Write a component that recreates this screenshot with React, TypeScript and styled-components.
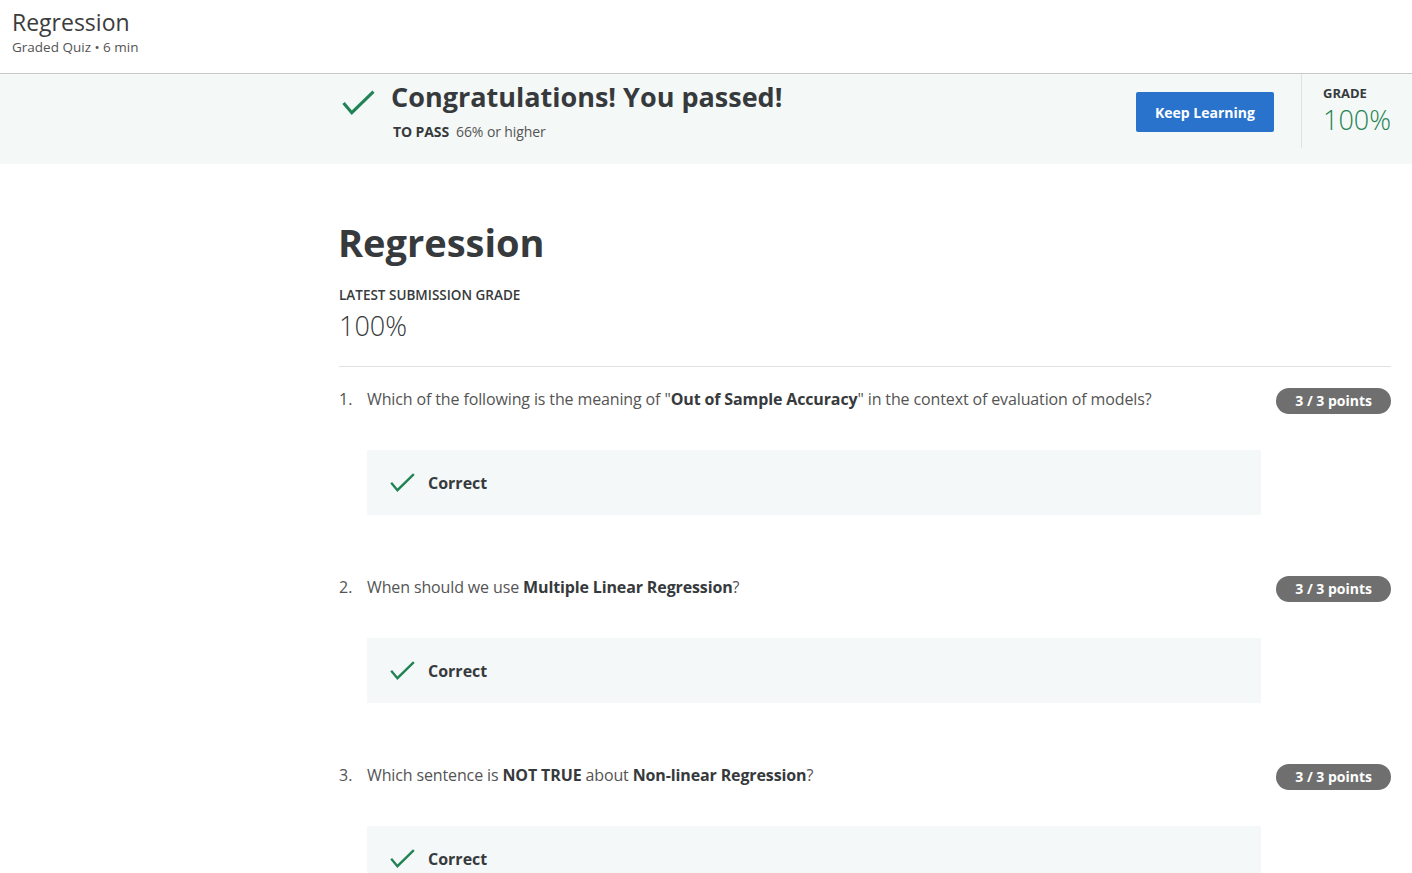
import React from "react";
import styled, { createGlobalStyle } from "styled-components";

const Global = createGlobalStyle`
  html, body { margin: 0; padding: 0; background: #fff; }
  body { font-family: "Open Sans", "Noto Sans", Arial, sans-serif; color: #373a3c; }
  * { box-sizing: border-box; }
`;

const Header = styled.header`
  height: 74px;
  border-bottom: 1px solid #c8c8c8;
  padding: 6px 12px 0;
`;

const HeaderTitle = styled.h1`
  margin: 0;
  font-size: 23px;
  font-weight: 400;
  line-height: 32px;
  color: #3c3c3c;
`;

const HeaderSub = styled.div`
  font-size: 13.5px;
  line-height: 18px;
  color: #545454;
`;

const Banner = styled.section`
  height: 90px;
  background: #f4f8f7;
  display: flex;
  align-items: flex-start;
  padding-left: 342px;
`;

const BannerMain = styled.div`
  flex: 1;
  display: flex;
  gap: 16px;
  padding-top: 8px;
`;

const BannerIcon = styled.div`
  padding-top: 8px;
`;

const BannerTitle = styled.h2`
  margin: 0;
  font-size: 27px;
  font-weight: 700;
  line-height: 30px;
  color: #373a3c;
`;

const PassLine = styled.div`
  margin-top: 12px;
  font-size: 14px;
  line-height: 16px;
  color: #545454;
  margin-left: 2px;
  letter-spacing: -0.1px;
  b { color: #373a3c; font-weight: 700; margin-right: 7px; }
`;

const Button = styled.button`
  margin-top: 18px;
  width: 138px;
  height: 40px;
  background: #2a73cc;
  color: #fff;
  border: none;
  border-radius: 2px;
  font-family: inherit;
  font-size: 14px;
  font-weight: 700;
  margin-right: 27px;
`;

const GradeBox = styled.div`
  height: 74px;
  width: 111px;
  border-left: 1px solid #dfe2e1;
  padding: 11px 0 0 21px;
`;

const GradeLabel = styled.div`
  font-size: 13px;
  font-weight: 700;
  line-height: 16px;
  color: #373a3c;
`;

const GradeValue = styled.div`
  margin-top: 4px;
  font-size: 27px;
  font-weight: 300;
  line-height: 30px;
  color: #1f8354;
`;

const Main = styled.main`
  margin-left: 339px;
  margin-right: 21px;
  padding-top: 52px;
`;

const Title = styled.h1`
  margin: 0 0 0 -1px;
  font-size: 38px;
  font-weight: 700;
  line-height: 52px;
  color: #373a3c;
`;

const SubLabel = styled.div`
  margin-top: 18px;
  font-size: 13.5px;
  font-weight: 600;
  line-height: 18px;
  color: #373a3c;
  text-transform: uppercase;
`;

const Score = styled.div`
  margin-top: 4px;
  font-size: 27px;
  font-weight: 300;
  line-height: 36px;
  color: #373a3c;
`;

const Divider = styled.hr`
  margin: 22px 0 0;
  border: none;
  border-top: 1px solid #e1e1e1;
`;

const QuestionList = styled.div`
  padding-top: 20px;
`;

const Question = styled.div`
  height: 188px;
`;

const QRow = styled.div`
  display: flex;
  align-items: flex-start;
`;

const QNum = styled.span`
  width: 28px;
  font-size: 16px;
  line-height: 24px;
  color: #545454;
`;

const QText = styled.div`
  flex: 1;
  font-size: 16px;
  line-height: 24px;
  letter-spacing: -0.13px;
  color: #545454;
  b { color: #373a3c; font-weight: 700; }
`;

const Badge = styled.span`
  margin-top: 1px;
  height: 26px;
  padding: 0 19px;
  border-radius: 13px;
  background: #6f6f6f;
  color: #fff;
  font-size: 14px;
  font-weight: 700;
  line-height: 26px;
  white-space: nowrap;
`;

const CorrectBox = styled.div`
  margin: 36px 130px 0 28px;
  height: 65px;
  background: #f5f8f8;
  display: flex;
  align-items: center;
  gap: 13px;
  padding-left: 23px;
  font-size: 16px;
  font-weight: 700;
  color: #373a3c;
`;

const Check = ({ size }: { size: number }) => (
  <svg width={size} height={size * 0.75} viewBox="0 0 32 24" fill="none">
    <path d="M1.5 12.5 L9.5 22 L30.5 1.5" stroke="#1f8354" strokeWidth="3" strokeLinecap="butt" strokeLinejoin="miter" />
  </svg>
);

const questions: { text: React.ReactNode }[] = [
  {
    text: (
      <>
        Which of the following is the meaning of "<b>Out of Sample Accuracy</b>" in the context of evaluation of models?
      </>
    ),
  },
  {
    text: (
      <>
        When should we use <b>Multiple Linear Regression</b>?
      </>
    ),
  },
  {
    text: (
      <>
        Which sentence is <b>NOT TRUE</b> about <b>Non-linear Regression</b>?
      </>
    ),
  },
];

export default function App() {
  return (
    <>
      <Global />
      <Header>
        <HeaderTitle>Regression</HeaderTitle>
        <HeaderSub>Graded Quiz • 6 min</HeaderSub>
      </Header>
      <Banner>
        <BannerMain>
          <BannerIcon>
            <Check size={33} />
          </BannerIcon>
          <div>
            <BannerTitle>Congratulations! You passed!</BannerTitle>
            <PassLine>
              <b>TO PASS</b>66% or higher
            </PassLine>
          </div>
        </BannerMain>
        <Button>Keep Learning</Button>
        <GradeBox>
          <GradeLabel>GRADE</GradeLabel>
          <GradeValue>100%</GradeValue>
        </GradeBox>
      </Banner>
      <Main>
        <Title>Regression</Title>
        <SubLabel>Latest Submission Grade</SubLabel>
        <Score>100%</Score>
        <Divider />
        <QuestionList>
          {questions.map((q, i) => (
            <Question key={i}>
              <QRow>
                <QNum>{i + 1}.</QNum>
                <QText>{q.text}</QText>
                <Badge>3 / 3 points</Badge>
              </QRow>
              <CorrectBox>
                <Check size={25} />
                Correct
              </CorrectBox>
            </Question>
          ))}
        </QuestionList>
      </Main>
    </>
  );
}
